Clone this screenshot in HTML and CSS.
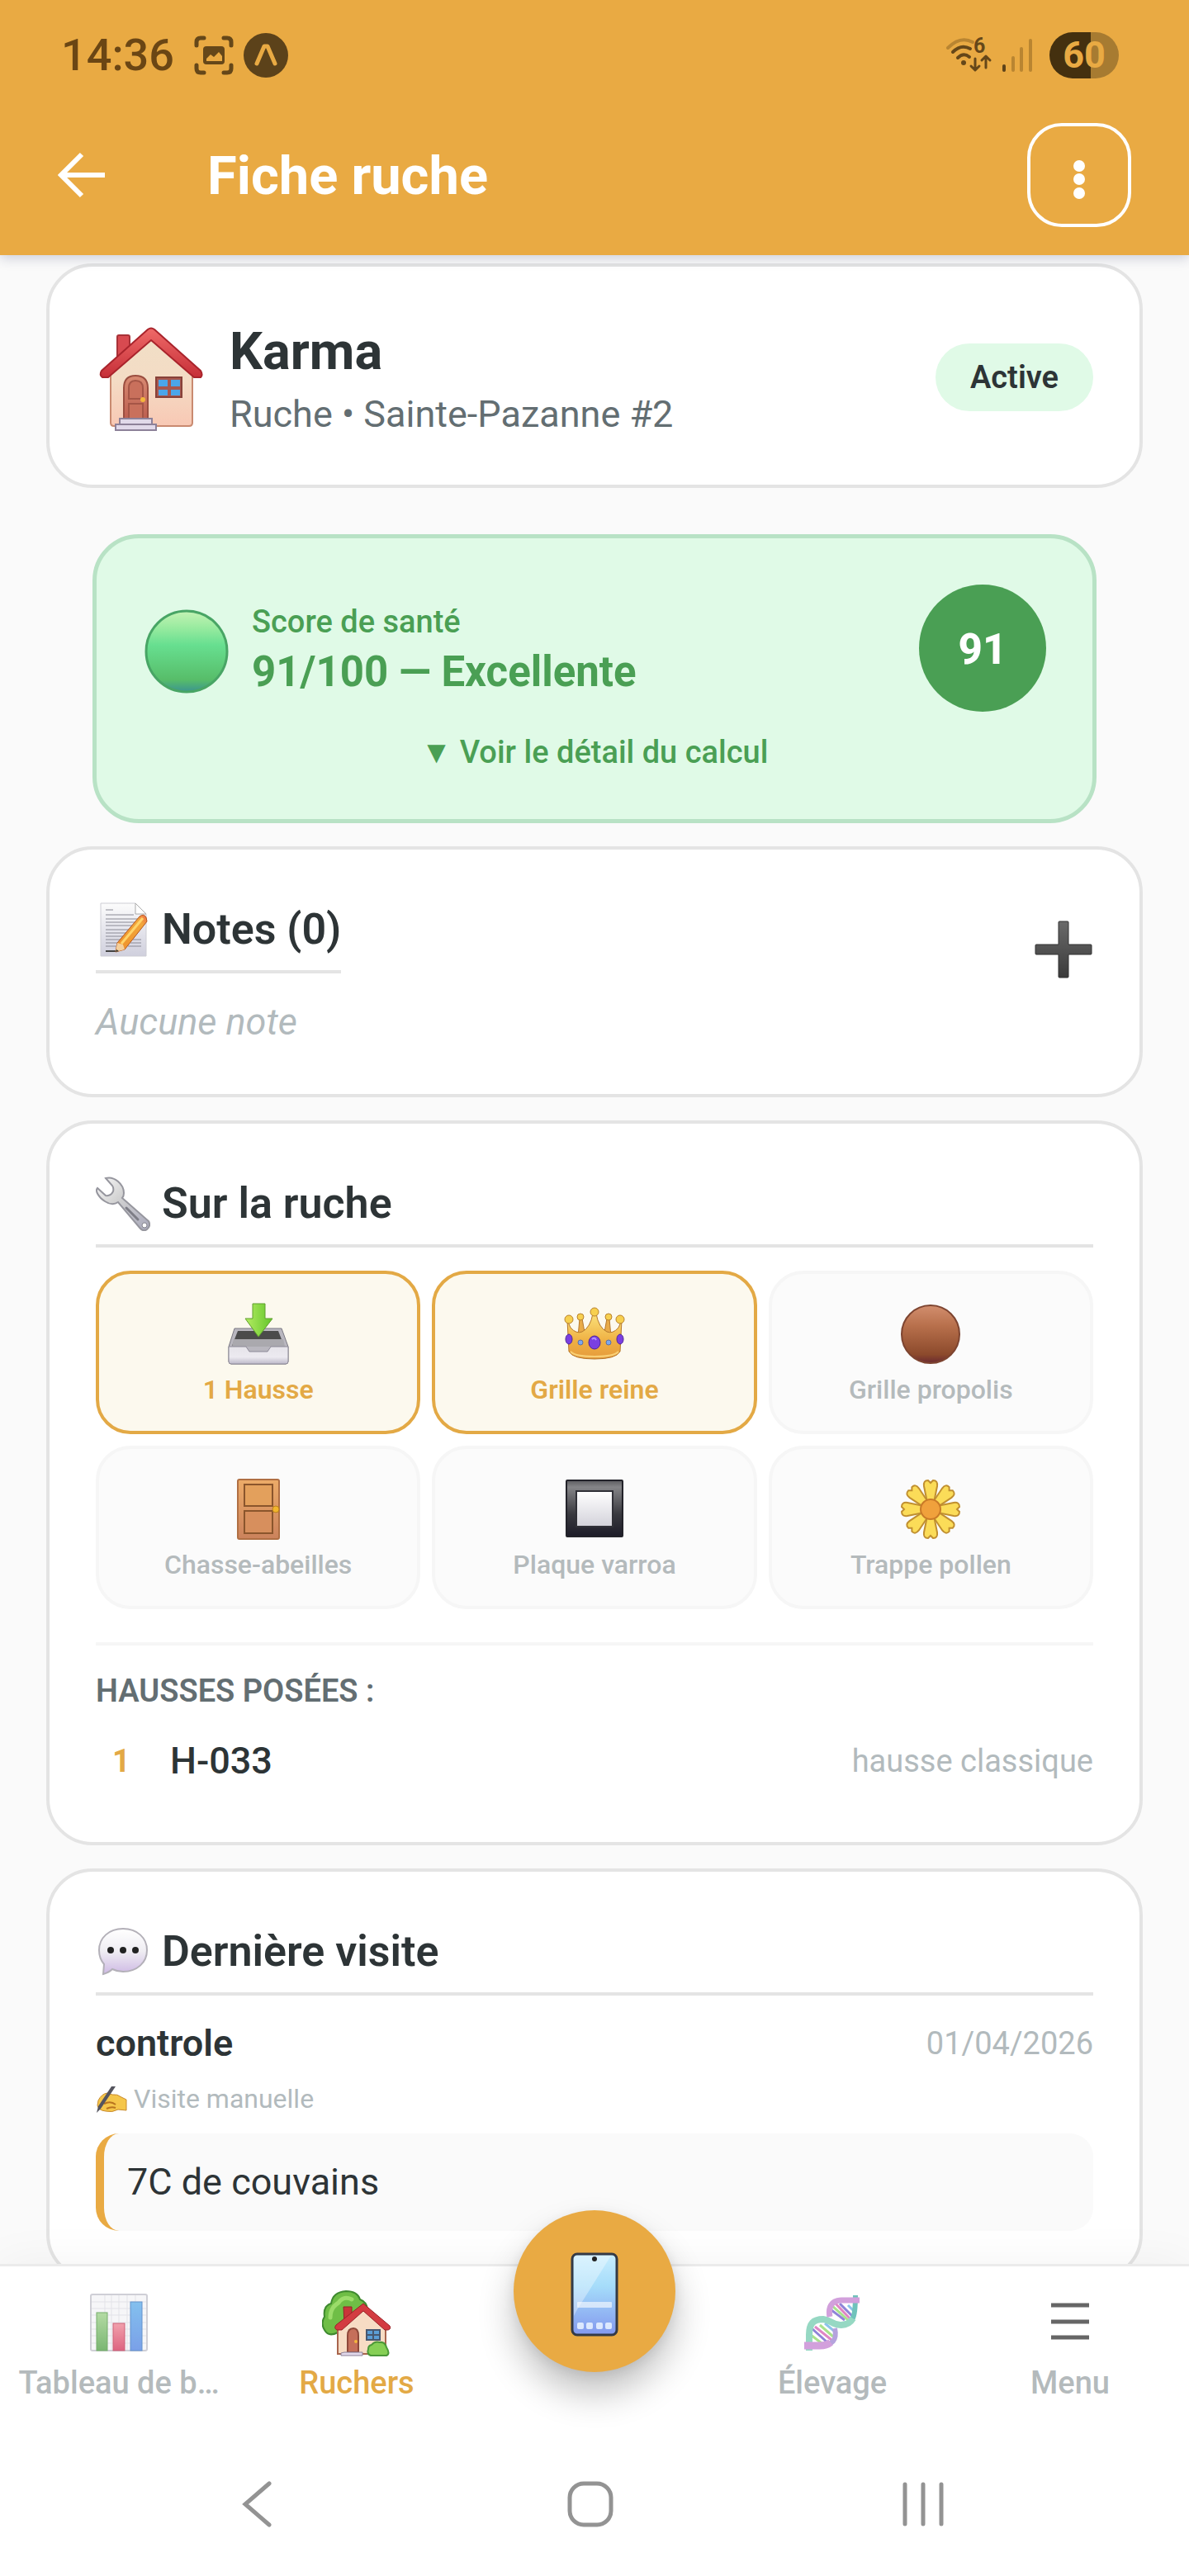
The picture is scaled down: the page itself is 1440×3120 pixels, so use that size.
FILE: index.html
```html
<!DOCTYPE html>
<html lang="fr">
<head>
<meta charset="utf-8">
<meta name="viewport" content="width=device-width, initial-scale=1">
<title>Fiche ruche</title>
<link rel="stylesheet" href="styles.css">
</head>
<body>
<div class="app">
  <header class="header">
    <div class="status">
      <span class="status-time">14:36</span>
      <svg class="status-scan" viewBox="0 0 48 48" aria-hidden="true">
        <g fill="none" stroke="#654719" stroke-width="5" stroke-linecap="round" stroke-linejoin="round">
          <path d="M3 12V8Q3 3 8 3H12"/><path d="M36 3H40Q45 3 45 8V12"/><path d="M45 36V40Q45 45 40 45H36"/><path d="M12 45H8Q3 45 3 40V36"/>
        </g>
        <rect x="11" y="13" width="26" height="22" rx="4" fill="#654719"/>
        <path d="M15 31V28L20 23L24 26L30 20L34 25V31Z" fill="#e9aa43"/>
      </svg>
      <svg class="status-expo" viewBox="0 0 54 54" aria-hidden="true">
        <circle cx="27" cy="27" r="27" fill="#5c421a"/>
        <path d="M16 37L25 16H29L38 37" fill="none" stroke="#e9aa43" stroke-width="5" stroke-linecap="round" stroke-linejoin="round"/>
      </svg>
      <span class="status-space"></span>
      <svg class="status-wifi" viewBox="0 0 56 42" aria-hidden="true">
        <g fill="none" stroke-width="4" stroke-linecap="round">
          <path d="M2 12Q17-3 32 5" stroke="#b98531"/>
          <path d="M8 17Q18 7 29 13" stroke="#654719"/>
          <path d="M14 24Q21 17 28 23" stroke="#654719"/>
        </g>
        <circle cx="21" cy="30" r="3" fill="#654719"/>
        <text x="33" y="18" class="wifi-gen">6</text>
        <path d="M35 25V38M30 34L35 39L40 34M48 36V22M43 27L48 22L53 27" fill="none" stroke="#654719" stroke-width="3" stroke-linecap="round" stroke-linejoin="round"/>
      </svg>
      <svg class="status-signal" viewBox="0 0 36 40" aria-hidden="true">
        <g stroke-width="4" stroke-linecap="round">
          <path d="M2 33V38" stroke="#5c421a"/><path d="M13 23V38M23 12V38M34 2V38" stroke="#b98531"/>
        </g>
      </svg>
      <span class="battery">60</span>
    </div>
    <div class="appbar">
      <button class="back" type="button" aria-label="Retour">
        <svg viewBox="0 0 84 84" aria-hidden="true"><path d="M71 42H18M43 17L18 42L43 67" fill="none" stroke="#fff" stroke-width="6"/></svg>
      </button>
      <h1 class="appbar-title">Fiche ruche</h1>
      <button class="more" type="button" aria-label="Plus d'options">
        <svg viewBox="0 0 14 48" aria-hidden="true"><g fill="#fff"><circle cx="7" cy="8" r="7"/><circle cx="7" cy="24" r="7"/><circle cx="7" cy="41" r="7"/></g></svg>
      </button>
    </div>
  </header>

  <main class="content">
    <section class="card hive">
      <svg class="hive-icon" viewBox="0 0 134 134" aria-hidden="true">
        <defs>
          <linearGradient id="wall" x1="0" y1="0" x2="0" y2="1"><stop offset="0" stop-color="#f0dfc6"/><stop offset=".5" stop-color="#f4dcc5"/><stop offset="1" stop-color="#f8c8b4"/></linearGradient>
          <linearGradient id="roof" x1="0" y1="0" x2="0" y2="1"><stop offset="0" stop-color="#ef6a68"/><stop offset="1" stop-color="#c62f38"/></linearGradient>
          <linearGradient id="door" x1="0" y1="0" x2="0" y2="1"><stop offset="0" stop-color="#d88a72"/><stop offset="1" stop-color="#bd5f50"/></linearGradient>
        </defs>
        <path d="M26 18Q26 16 28 16H39Q41 16 41 18V42L26 56Z" fill="#d84a50" stroke="#a83238" stroke-width="2"/>
        <path d="M18 56L67 14L117 56V122Q117 126 113 126H22Q18 126 18 122Z" fill="url(#wall)" stroke="#c98a70" stroke-width="2"/>
        <path d="M63 9Q67 6 71 9L127 59Q130 64 127 67H119L67 22L15 67H8Q4 64 7 59Z" fill="url(#roof)" stroke="#a9242c" stroke-width="2" stroke-linejoin="round"/>
        <path d="M34 117V80Q34 65 48 65Q63 65 63 80V117Z" fill="url(#door)" stroke="#9b4e40" stroke-width="2"/>
        <path d="M40 93V80Q40 71 48 71Q57 71 57 80V93ZM40 99H57V117H40Z" fill="#c9705c" stroke="#a55546" stroke-width="2"/>
        <circle cx="57" cy="94" r="3" fill="#f4b63c"/>
        <rect x="73" y="67" width="31" height="24" fill="#a8574e" stroke="#874139" stroke-width="2"/>
        <path d="M76 70H87V78H76ZM91 70H102V78H91ZM76 82H87V89H76ZM91 82H102V89H91Z" fill="#4ba6ea"/>
        <path d="M29 117H68V124H29ZM24 124H73V131H24Z" fill="#e1d9ea" stroke="#8d8199" stroke-width="2"/>
      </svg>
      <div class="hive-info">
        <h2 class="hive-name">Karma</h2>
        <p class="hive-place">Ruche • Sainte-Pazanne #2</p>
      </div>
      <span class="badge">Active</span>
    </section>

    <section class="score">
      <div class="score-row">
        <svg class="score-light" viewBox="0 0 104 110" aria-hidden="true">
          <defs><linearGradient id="green" x1="0" y1="0" x2="0" y2="1"><stop offset="0" stop-color="#c4f3b4"/><stop offset=".2" stop-color="#9aeba0"/><stop offset=".42" stop-color="#67df90"/><stop offset=".85" stop-color="#57bd69"/><stop offset="1" stop-color="#3b9490"/></linearGradient></defs>
          <circle cx="53" cy="59" r="49" fill="url(#green)" stroke="#48a565" stroke-width="3"/>
        </svg>
        <div class="score-text">
          <p class="score-label">Score de santé</p>
          <p class="score-value">91/100 — Excellente</p>
        </div>
        <span class="score-ring">91</span>
      </div>
      <button class="score-more" type="button">▼ Voir le détail du calcul</button>
    </section>

    <section class="card">
      <div class="notes-head">
        <h2 class="heading">
          <svg viewBox="0 0 66 66" aria-hidden="true">
            <defs>
              <linearGradient id="sheet" x1="0" y1="0" x2="0" y2="1"><stop offset="0" stop-color="#fcfcfc"/><stop offset="1" stop-color="#cfcfdd"/></linearGradient>
              <linearGradient id="pencil" x1="1" y1="0" x2="0" y2="1"><stop offset="0" stop-color="#ee6b4a"/><stop offset=".2" stop-color="#f2a73b"/><stop offset="1" stop-color="#ee8e28"/></linearGradient>
            </defs>
            <path d="M6 1H48L61 14V65H6Z" fill="url(#sheet)" stroke="#cdcdd4"/>
            <path d="M48 1V14H61Z" fill="#fff" stroke="#aaa"/>
            <path d="M12 9H21M12 15H46M12 20H52M12 24H54M12 28H50M12 33H47M12 37H44M12 41H41M12 45H39M12 49H36M12 53H30M45 45H55M42 49H55M39 53H55" stroke="#8a8a95"/>
            <path d="M12 59H26" stroke="#444" stroke-width="2"/>
            <path d="M53 17Q58 13 61 18L62 23L35 57L24 60L26 49Z" fill="url(#pencil)" stroke="#b4551f"/>
            <path d="M26 49L24 60L35 57L33 51Z" fill="#f4cf9c"/><path d="M25 57L24 60L28 59Z" fill="#333"/>
            <path d="M31 50L57 19" stroke="#ffd46a" stroke-width="3"/>
          </svg>
          Notes (0)
        </h2>
        <button class="add" type="button" aria-label="Ajouter une note">
          <svg viewBox="0 0 72 72" aria-hidden="true">
            <defs><linearGradient id="plus" x1="0" y1="0" x2="0" y2="1"><stop offset="0" stop-color="#6a6a6a"/><stop offset="1" stop-color="#3a3a3a"/></linearGradient></defs>
            <path d="M31 2H41Q42 2 42 3V30H69Q70 30 70 31V41Q70 42 69 42H42V69Q42 70 41 70H31Q30 70 30 69V42H3Q2 42 2 41V31Q2 30 3 30H30V3Q30 2 31 2Z" fill="url(#plus)" stroke="#333"/>
          </svg>
        </button>
      </div>
      <p class="empty">Aucune note</p>
    </section>

    <section class="card">
      <h2 class="heading">
        <svg viewBox="0 0 66 66" aria-hidden="true">
          <defs><linearGradient id="steel" x1="0" y1="0" x2="1" y2="1"><stop offset="0" stop-color="#fafafa"/><stop offset=".4" stop-color="#d2d2d2"/><stop offset="1" stop-color="#a8a8ba"/></linearGradient></defs>
          <path d="M12 2C22-1 34 9 34 20Q34 24 32 26L64 54Q67 60 62 64Q58 67 54 63L27 31Q20 36 11 30C3 25-1 17 2 14L12 23Q18 24 21 18Q22 14 20 11Z" fill="url(#steel)" stroke="#96969e" stroke-width="2"/>
          <path d="M37 38L51 52" stroke="#7d7d86" stroke-width="3" stroke-linecap="round"/>
          <circle cx="59" cy="59" r="3" fill="#fff" stroke="#85858f"/>
        </svg>
        Sur la ruche
      </h2>
      <div class="tiles">
        <button class="tile tile-on" type="button" aria-pressed="true">
          <svg viewBox="0 0 76 76" aria-hidden="true">
            <defs>
              <linearGradient id="tray" x1="0" y1="0" x2="0" y2="1"><stop offset="0" stop-color="#e6e4ea"/><stop offset=".6" stop-color="#eceaf0"/><stop offset="1" stop-color="#bdb9c9"/></linearGradient>
              <linearGradient id="arrow" x1="0" y1="0" x2="1" y2="0"><stop offset="0" stop-color="#b4ec62"/><stop offset="1" stop-color="#63c52b"/></linearGradient>
            </defs>
            <path d="M9 32H66L74 54V72Q74 75 71 75H5Q2 75 2 72V54Z" fill="#b9b7bf" stroke="#7b7983"/>
            <path d="M13 35H62L69 53H6Z" fill="#4b4b4b"/><path d="M8 45H68L70 54H6Z" fill="#aaa9ae"/>
            <path d="M2 54H23L27 60H49L53 54H74V72Q74 75 71 75H5Q2 75 2 72Z" fill="url(#tray)" stroke="#8d8a98"/>
            <path d="M31 2H46V20H55L38 42L22 20H31Z" fill="url(#arrow)" stroke="#5f9f2c"/>
          </svg>
          <span>1 Hausse</span>
        </button>
        <button class="tile tile-on" type="button" aria-pressed="true">
          <svg viewBox="0 0 76 76" aria-hidden="true">
            <defs><linearGradient id="gold" x1="0" y1="0" x2="0" y2="1"><stop offset="0" stop-color="#fbe27a"/><stop offset=".6" stop-color="#efb043"/><stop offset="1" stop-color="#e59a3c"/></linearGradient></defs>
            <path d="M18 42L20 20H23L27 42ZM49 42L53 20H56L58 42Z" fill="#e9ab48" stroke="#b5782d"/>
            <path d="M5 22L9 31Q16 39 23 36Q33 31 36 14H40Q43 31 53 36Q60 39 67 31L71 22L69 60Q64 69 38 69Q12 69 7 60Z" fill="url(#gold)" stroke="#b5782d"/>
            <g fill="#f7d04f" stroke="#b9822d"><circle cx="7" cy="21" r="5"/><circle cx="69" cy="21" r="5"/><circle cx="38" cy="12" r="5"/><circle cx="21" cy="18" r="4"/><circle cx="55" cy="18" r="4"/></g>
            <g fill="#7a3fe0" stroke="#4d2499"><ellipse cx="38" cy="49" rx="7" ry="8"/><ellipse cx="7" cy="45" rx="4" ry="6"/><ellipse cx="69" cy="45" rx="4" ry="6"/></g>
            <g fill="#7ca8ee" stroke="#5b6ea8"><circle cx="21" cy="49" r="3"/><circle cx="55" cy="49" r="3"/></g>
            <path d="M9 60Q14 66 38 66Q62 66 67 60" fill="none" stroke="#f9cf74" stroke-width="2"/>
            <path d="M35 45Q38 42 40 46" stroke="#b390ff" stroke-width="2" fill="none"/>
          </svg>
          <span>Grille reine</span>
        </button>
        <button class="tile" type="button" aria-pressed="false">
          <svg viewBox="0 0 76 76" aria-hidden="true">
            <defs><linearGradient id="brown" x1="0" y1="0" x2="0" y2="1"><stop offset="0" stop-color="#d28e6e"/><stop offset=".35" stop-color="#b8704c"/><stop offset=".85" stop-color="#8c4a2c"/><stop offset="1" stop-color="#6a2930"/></linearGradient></defs>
            <circle cx="38" cy="39" r="35" fill="url(#brown)" stroke="#7d4430" stroke-width="2"/>
          </svg>
          <span>Grille propolis</span>
        </button>
        <button class="tile" type="button" aria-pressed="false">
          <svg viewBox="0 0 76 76" aria-hidden="true">
            <defs><linearGradient id="wood" x1="0" y1="0" x2="0" y2="1"><stop offset="0" stop-color="#ecab68"/><stop offset="1" stop-color="#cb825c"/></linearGradient></defs>
            <rect x="13" y="3" width="50" height="72" rx="2" fill="url(#wood)" stroke="#b06f43" stroke-width="2"/>
            <rect x="21" y="9" width="34" height="26" fill="#e3a05c" stroke="#8a552c" stroke-width="2"/>
            <rect x="21" y="41" width="34" height="27" fill="#d78f5d" stroke="#8a552c" stroke-width="2"/>
            <circle cx="59" cy="39" r="4" fill="#f2b52c" stroke="#b9801c"/>
          </svg>
          <span>Chasse-abeilles</span>
        </button>
        <button class="tile" type="button" aria-pressed="false">
          <svg viewBox="0 0 76 76" aria-hidden="true">
            <defs>
              <linearGradient id="frame" x1="0" y1="0" x2="0" y2="1"><stop offset="0" stop-color="#5c5c60"/><stop offset=".12" stop-color="#858588"/><stop offset=".6" stop-color="#39393f"/><stop offset="1" stop-color="#1d1c28"/></linearGradient>
              <linearGradient id="pane" x1="0" y1="0" x2="0" y2="1"><stop offset="0" stop-color="#fff"/><stop offset="1" stop-color="#d3d2da"/></linearGradient>
            </defs>
            <rect x="4" y="4" width="68" height="68" rx="1" fill="url(#frame)" stroke="#222229" stroke-width="2"/>
            <rect x="16" y="17" width="44" height="43" fill="url(#pane)" stroke="#303037" stroke-width="2"/>
          </svg>
          <span>Plaque varroa</span>
        </button>
        <button class="tile" type="button" aria-pressed="false">
          <svg viewBox="0 0 76 76" aria-hidden="true">
            <defs><path id="petal" d="M34 31L30 11Q29 4 35 4L38 7L41 4Q47 4 46 11L42 31Z"/></defs>
            <g fill="#fbdc58" stroke="#c08f30" stroke-width="2">
              <use href="#petal"/><use href="#petal" transform="rotate(45 38 39)"/><use href="#petal" transform="rotate(90 38 39)"/><use href="#petal" transform="rotate(135 38 39)"/><use href="#petal" transform="rotate(180 38 39)"/><use href="#petal" transform="rotate(225 38 39)"/><use href="#petal" transform="rotate(270 38 39)"/><use href="#petal" transform="rotate(315 38 39)"/>
            </g>
            <circle cx="38" cy="39" r="12" fill="#f0a13c" stroke="#c97a28" stroke-width="2"/>
          </svg>
          <span>Trappe pollen</span>
        </button>
      </div>
      <div class="supers">
        <h3 class="supers-title">HAUSSES POSÉES :</h3>
        <ol class="supers-list">
          <li class="super"><span class="super-rank">1</span><span class="super-name">H-033</span><span class="super-kind">hausse classique</span></li>
        </ol>
      </div>
    </section>

    <section class="card">
      <h2 class="heading">
        <svg viewBox="0 0 66 66" aria-hidden="true">
          <defs><linearGradient id="bubble" x1="0" y1="0" x2="0" y2="1"><stop offset="0" stop-color="#fff"/><stop offset=".5" stop-color="#efedf2"/><stop offset="1" stop-color="#ceb9e4"/></linearGradient></defs>
          <path d="M33 5C50 5 62 16 62 31S50 57 33 57Q26 57 20 54Q16 58 9 60L10 48Q4 41 4 31C4 16 16 5 33 5Z" fill="url(#bubble)" stroke="#b3b0b8" stroke-width="2"/>
          <g fill="#222"><circle cx="18" cy="31" r="4"/><circle cx="33" cy="31" r="4"/><circle cx="48" cy="31" r="4"/></g>
        </svg>
        Dernière visite
      </h2>
      <div class="visit-head">
        <h3 class="visit-title">controle</h3>
        <time class="visit-date" datetime="2026-04-01">01/04/2026</time>
      </div>
      <p class="visit-source">
        <svg viewBox="0 0 38 38" aria-hidden="true">
          <path d="M3 21Q7 13 14 12L20 14Q26 13 31 17L37 20V33L27 32Q20 36 12 34Q3 33 2 27Z" fill="#f5c64a" stroke="#c98a2c"/>
          <path d="M10 25Q18 21 24 26M13 31Q19 28 24 30" stroke="#b8741f" stroke-width="2" fill="none"/>
          <path d="M24 4L6 31L1 36L3 28L19 4Z" fill="#54545e"/>
        </svg>
        Visite manuelle
      </p>
      <blockquote class="visit-note">7C de couvains</blockquote>
    </section>
  </main>

  <nav class="tabs">
    <a class="tab" href="#tableau">
      <svg viewBox="0 0 84 84" aria-hidden="true">
        <defs>
          <linearGradient id="barA" x1="0" y1="0" x2="0" y2="1"><stop offset="0" stop-color="#b4dba4"/><stop offset="1" stop-color="#7ab672"/></linearGradient>
          <linearGradient id="barB" x1="0" y1="0" x2="0" y2="1"><stop offset="0" stop-color="#f1a0ac"/><stop offset="1" stop-color="#dd6480"/></linearGradient>
          <linearGradient id="barC" x1="0" y1="0" x2="0" y2="1"><stop offset="0" stop-color="#83c0ee"/><stop offset="1" stop-color="#7aa0e8"/></linearGradient>
        </defs>
        <rect x="8" y="8" width="68" height="68" rx="2" fill="#f6f6f8" stroke="#cfcfd6" stroke-width="2"/>
        <path d="M9 17H75M9 25H75M9 33H75M9 42H75M9 50H75M9 58H75M9 67H75M25 9V75M33 9V75M42 9V75M52 9V75M62 9V75" stroke="#e3e3e8"/>
        <rect x="15" y="30" width="13" height="46" fill="url(#barA)" stroke="#76ad6c"/>
        <rect x="35" y="43" width="14" height="33" fill="url(#barB)" stroke="#cc6379"/>
        <rect x="56" y="17" width="14" height="59" fill="url(#barC)" stroke="#6593cc"/>
      </svg>
      <span class="tab-label">Tableau de b…</span>
    </a>
    <a class="tab tab-on" href="#ruchers" aria-current="page">
      <svg viewBox="0 0 84 84" aria-hidden="true">
        <path d="M19 54Q8 60 3 51Q-2 43 3 35Q1 22 11 19Q13 5 29 4Q43 4 46 14Q56 18 55 30Q54 48 36 50Z" fill="#6fbe46" stroke="#3f8a30" stroke-width="2"/>
        <path d="M10 36Q10 24 20 18Q26 9 36 14" stroke="#9bdc6a" stroke-width="5" fill="none" stroke-linecap="round"/>
        <path d="M26 23H36V36L27 45Z" fill="#c93439" stroke="#942127"/>
        <path d="M19 48L49 25L77 50V80H19Z" fill="#f7dcc4" stroke="#a8654d" stroke-width="2"/>
        <path d="M50 19L82 46Q84 50 80 51H76L50 28L24 51H18Q14 49 17 45Z" fill="#d33b41" stroke="#992228"/>
        <path d="M31 78V58Q31 49 38 49Q44 49 44 58V78Z" fill="#c56f5a" stroke="#8e4839" stroke-width="2"/><circle cx="41" cy="65" r="2" fill="#f4b63c"/>
        <rect x="53" y="50" width="18" height="14" fill="#48576f"/><path d="M55 52H61V56H55ZM63 52H69V56H63ZM55 58H61V62H55ZM63 58H69V62H63Z" fill="#5b9dd6"/>
        <path d="M27 78H49V82H23V79Z" fill="#e1d9ea" stroke="#8d8199"/>
        <path d="M59 82Q54 80 56 74Q56 70 60 69Q64 64 70 66Q76 65 78 72Q83 80 78 82Z" fill="#86cf55" stroke="#4b9838" stroke-width="2"/>
      </svg>
      <span class="tab-label">Ruchers</span>
    </a>
    <div class="tab">
      <button class="fab" type="button" aria-label="Scanner">
        <svg viewBox="0 0 60 104" aria-hidden="true">
          <defs><linearGradient id="screen" x1="0" y1="0" x2="0" y2="1"><stop offset="0" stop-color="#c9eeff"/><stop offset=".4" stop-color="#a5dcfa"/><stop offset="1" stop-color="#8398ee"/></linearGradient></defs>
          <rect x="3" y="3" width="54" height="98" rx="6" fill="url(#screen)" stroke="#343a46" stroke-width="3"/>
          <path d="M5 9Q5 5 9 5H50L8 72L5 78Z" fill="#fff" fill-opacity=".35"/>
          <circle cx="30" cy="9" r="3" fill="#222"/>
          <rect x="9" y="61" width="42" height="7" rx="1" fill="#fff" fill-opacity=".6"/>
          <g fill="#e5efff" fill-opacity=".9"><rect x="9" y="86" width="8" height="8" rx="2"/><rect x="20" y="86" width="8" height="8" rx="2"/><rect x="32" y="86" width="8" height="8" rx="2"/><rect x="43" y="86" width="8" height="8" rx="2"/></g>
        </svg>
      </button>
    </div>
    <a class="tab" href="#elevage">
      <svg viewBox="-7 -7 84 84" aria-hidden="true">
        <g stroke-width="3">
          <path d="M34 20L50 32M44 12L60 28M10 42L30 60" stroke="#8f83d8"/><path d="M34 14L54 32M9 50L22 60M20 38L36 52" stroke="#a9e28c"/><path d="M39 12L58 32M14 40L34 56" stroke="#df86c4"/><path d="M54 14L62 22M26 36L38 46" stroke="#8cc3ea"/>
        </g>
        <g fill="none" stroke-width="9">
          <path d="M63 2C63 28 61 37 46 37" stroke="#70c3bb" stroke-width="6"/>
          <path d="M38 42C41 56 36 63 18 63" stroke="#b5a3dd" stroke-width="6"/>
          <path d="M7 69V50C7 36 12 31 24 31C34 32 34 38 46 38C53 38 57 35 60 30" stroke="#96d8c3" stroke-width="8"/>
          <path d="M68 8H46C33 8 30 18 32 28" stroke="#d2a0dc" stroke-width="7"/>
          <path d="M1 63H20Q28 63 33 59" stroke="#d2a0dc"/>
        </g>
      </svg>
      <span class="tab-label">Élevage</span>
    </a>
    <a class="tab" href="#menu">
      <svg viewBox="0 0 84 84" aria-hidden="true"><path d="M19 21H65M19 41H65M19 60H65" stroke="#666" stroke-width="5"/></svg>
      <span class="tab-label">Menu</span>
    </a>
  </nav>

  <div class="system">
    <button type="button" aria-label="Précédent"><svg viewBox="0 0 60 60" aria-hidden="true"><path d="M44 5L15 30L44 55" fill="none" stroke="#939393" stroke-width="5" stroke-linecap="round"/></svg></button>
    <button type="button" aria-label="Accueil"><svg viewBox="0 0 60 60" aria-hidden="true"><rect x="5" y="5" width="50" height="50" rx="17" fill="none" stroke="#939393" stroke-width="5"/></svg></button>
    <button type="button" aria-label="Applications récentes"><svg viewBox="0 0 60 60" aria-hidden="true"><path d="M8 6V54M30 6V54M52 6V54" stroke="#939393" stroke-width="5" stroke-linecap="round"/></svg></button>
  </div>
</div>
</body>
</html>
```
FILE: styles.css
```css
*, *::before, *::after { box-sizing: border-box; }

body {
  margin: 0;
  font-family: Roboto, "Liberation Sans", "DejaVu Sans", sans-serif;
  color: #2d3436;
  background: #fafafa;
}

h1, h2, h3, p, ol, blockquote { margin: 0; padding: 0; }
svg { display: block; flex: none; }
a { color: inherit; text-decoration: none; }

button {
  margin: 0;
  padding: 0;
  border: 0;
  background: none;
  color: inherit;
  font: inherit;
  cursor: pointer;
}

.app {
  display: flex;
  flex-direction: column;
  height: 100vh;
}

/* Header */
.header {
  position: relative;
  z-index: 1;
  flex: none;
  background: #e9aa43;
  box-shadow: 0 4px 14px rgba(30, 40, 90, 0.2);
}

.status {
  display: flex;
  align-items: center;
  height: 114px;
  padding: 20px 85px 0 74px;
}

.status-time {
  margin-right: 24px;
  font-size: 54px;
  line-height: 64px;
  font-weight: 500;
  color: #6b4614;
}

.status-scan { width: 48px; height: 48px; margin-right: 12px; }
.status-expo { width: 54px; height: 54px; }
.status-space { flex: 1; }
.status-wifi { width: 56px; height: 42px; margin-right: 12px; overflow: visible; }
.wifi-gen { font-size: 25px; font-weight: 700; fill: #654719; }
.status-signal { width: 36px; height: 40px; margin-right: 21px; }

.battery {
  width: 84px;
  border-radius: 28px;
  background: linear-gradient(90deg, #44300f 60%, #a77b31 60%);
  color: #e9aa43;
  font-size: 45px;
  line-height: 56px;
  font-weight: 700;
  text-align: center;
}

.appbar {
  display: flex;
  align-items: center;
  height: 195px;
  padding: 0 70px 0 56px;
}

.back svg { width: 84px; height: 84px; }

.appbar-title {
  flex: 1;
  margin-left: 111px;
  padding-top: 3px;
  font-size: 65px;
  line-height: 76px;
  font-weight: 700;
  color: #fff;
}

.more {
  display: flex;
  align-items: center;
  justify-content: center;
  width: 126px;
  height: 126px;
  padding-top: 10px;
  border: 4px solid #fff;
  border-radius: 42px;
}

.more svg { width: 14px; height: 48px; }

/* Scrolling content */
.content {
  flex: 1;
  min-height: 0;
  padding: 10px 56px 0;
  overflow-y: auto;
  scrollbar-width: none;
}

.card {
  margin-bottom: 28px;
  padding: 56px;
  border: 4px solid #e4e4e4;
  border-radius: 56px;
  background: #fff;
}

.hive {
  display: flex;
  align-items: center;
  margin-bottom: 56px;
  padding: 62px 56px 58px;
}

.hive-icon { width: 134px; height: 134px; }
.hive-info { flex: 1; margin-left: 28px; padding-top: 4px; }

.hive-name {
  margin-bottom: 12px;
  font-size: 63px;
  line-height: 74px;
  font-weight: 700;
}

.hive-place {
  font-size: 45px;
  line-height: 54px;
  color: #636e72;
}

.badge {
  padding: 18px 42px;
  border-radius: 42px;
  background: #e0fae7;
  font-size: 38px;
  line-height: 46px;
  font-weight: 600;
}

.score {
  margin: 0 56px 28px;
  padding: 56px 56px 58px;
  border: 5px solid #b8e2c5;
  border-radius: 56px;
  background: #e0fae7;
  color: #4a9f54;
}

.score-row {
  display: flex;
  align-items: center;
}

.score-light { width: 104px; height: 110px; }
.score-text { flex: 1; margin-left: 28px; padding-top: 4px; }

.score-label {
  margin-bottom: 8px;
  font-size: 38px;
  line-height: 46px;
  font-weight: 500;
}

.score-value {
  font-size: 51px;
  line-height: 60px;
  font-weight: 700;
}

.score-ring {
  width: 154px;
  height: 154px;
  padding-top: 4px;
  border-radius: 50%;
  background: #4a9f54;
  color: #fff;
  font-size: 51px;
  line-height: 150px;
  font-weight: 800;
  text-align: center;
}

.score-more {
  display: block;
  width: 100%;
  margin-top: 26px;
  font-size: 38px;
  line-height: 46px;
  font-weight: 500;
  text-align: center;
}

.heading {
  display: flex;
  align-items: center;
  gap: 14px;
  margin-bottom: 28px;
  padding-bottom: 8px;
  border-bottom: 4px solid #e4e4e4;
  font-size: 52px;
  line-height: 82px;
  font-weight: 600;
}

.heading svg { width: 66px; height: 66px; }

.notes-head {
  display: flex;
  align-items: center;
  justify-content: space-between;
}

.add { padding-top: 7px; }
.add svg { width: 72px; height: 72px; }

.empty {
  font-size: 45px;
  line-height: 62px;
  font-style: italic;
  color: #b2babd;
}

/* Hive equipment */
.tiles {
  display: grid;
  grid-template-columns: repeat(3, 1fr);
  gap: 14px;
}

.tile {
  display: flex;
  flex-direction: column;
  align-items: center;
  gap: 10px;
  padding: 34px 8px 30px;
  border: 4px solid #f6f6f6;
  border-radius: 42px;
  background: #fbfbfb;
  color: #b4babc;
  font-size: 32px;
  line-height: 40px;
  font-weight: 500;
}

.tile svg { width: 76px; height: 76px; }

.tile-on {
  border-color: #e3a945;
  background: #fcf9ee;
  color: #e3a945;
  font-weight: 600;
}

.supers {
  margin-top: 40px;
  padding-top: 32px;
  border-top: 4px solid #f6f6f6;
}

.supers-title {
  margin-bottom: 20px;
  font-size: 38px;
  line-height: 46px;
  font-weight: 600;
  color: #636e72;
}

.supers-list { list-style: none; }

.super {
  display: flex;
  align-items: center;
  padding: 12px 0;
}

.super-rank {
  width: 62px;
  margin-right: 28px;
  font-size: 38px;
  line-height: 46px;
  font-weight: 700;
  text-align: center;
  color: #e3a945;
}

.super-name {
  flex: 1;
  font-size: 45px;
  line-height: 60px;
  font-weight: 500;
}

.super-kind {
  font-size: 38px;
  line-height: 46px;
  color: #b2babd;
}

/* Last visit */
.visit-head {
  display: flex;
  align-items: center;
  justify-content: space-between;
  margin-bottom: 17px;
}

.visit-title {
  font-size: 45px;
  line-height: 60px;
  font-weight: 600;
}

.visit-date {
  font-size: 38px;
  line-height: 46px;
  color: #b2babd;
}

.visit-source {
  display: flex;
  align-items: center;
  gap: 8px;
  margin-bottom: 22px;
  font-size: 32px;
  line-height: 40px;
  color: #b2babd;
}

.visit-source svg { width: 38px; height: 38px; }

.visit-note {
  padding: 29px 28px;
  border-left: 10px solid #e9aa43;
  border-radius: 28px;
  background: #fafafa;
  font-size: 45px;
  line-height: 60px;
}

/* Bottom tabs: the shadow spreads upwards only */
.tabs {
  position: relative;
  z-index: 2;
  display: grid;
  grid-template-columns: repeat(5, 1fr);
  flex: none;
  height: 204px;
  border-top: 3px solid #ebebeb;
  background: #fff;
  box-shadow: 0 0 56px rgba(0, 0, 0, 0.05);
  clip-path: inset(-120px 0 0 0);
}

.tab {
  position: relative;
  display: flex;
  flex-direction: column;
  align-items: center;
  gap: 8px;
  min-width: 0;
  padding: 26px 8px 0;
  color: #b4babc;
}

.tab > svg { width: 84px; height: 84px; }
.tab-on { color: #e3a945; }

.tab-label {
  font-size: 38px;
  line-height: 46px;
  font-weight: 500;
  white-space: nowrap;
}

.fab {
  position: absolute;
  top: -68px;
  left: 50%;
  display: flex;
  align-items: center;
  justify-content: center;
  width: 196px;
  height: 196px;
  margin-left: -98px;
  padding-top: 8px;
  border-radius: 50%;
  background: #e9aa43;
  box-shadow: 0 26px 44px rgba(0, 0, 0, 0.24), 0 4px 14px rgba(0, 0, 0, 0.08);
}

.fab svg { width: 60px; height: 104px; }

.system {
  display: grid;
  grid-template-columns: repeat(3, 1fr);
  flex: none;
  height: 174px;
  padding: 0 121px 0 110px;
  background: #fff;
}

.system button {
  display: flex;
  align-items: center;
  justify-content: center;
}

.system svg { width: 60px; height: 60px; }
```
